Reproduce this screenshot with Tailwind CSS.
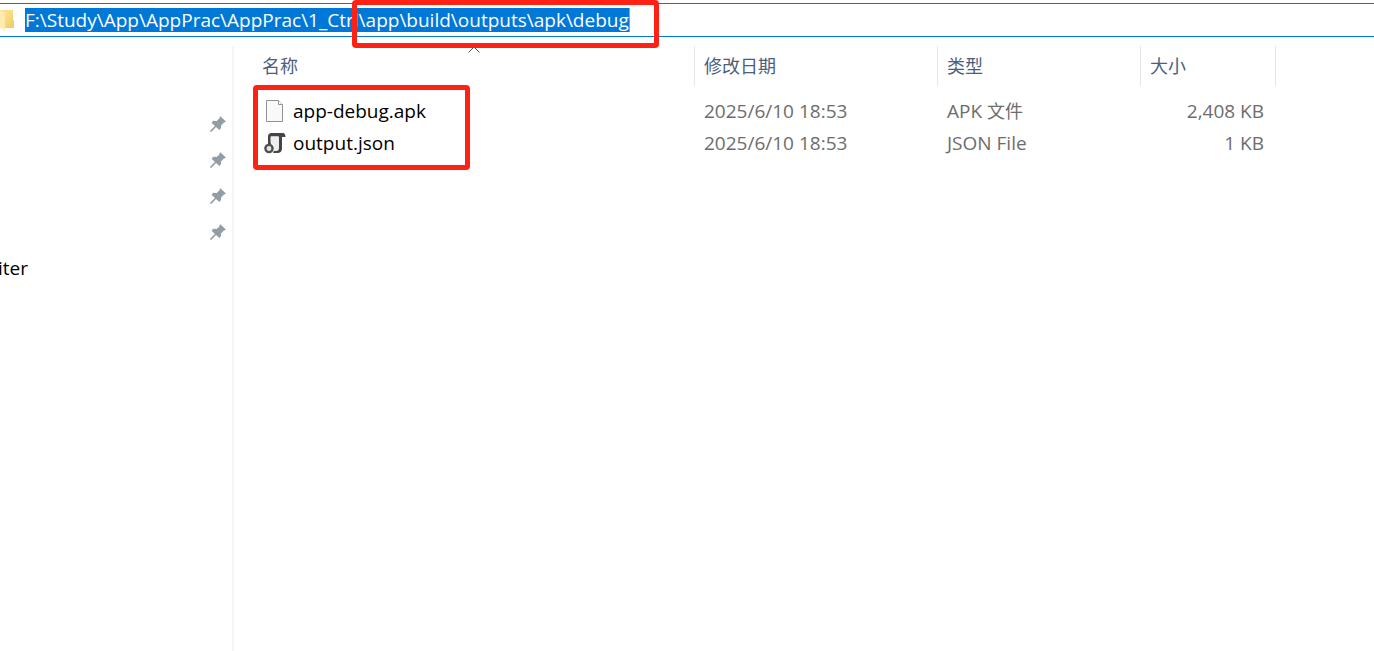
<!DOCTYPE html>
<html lang="zh-CN">
<head>
    <meta charset="UTF-8">
    <meta name="viewport" content="width=device-width, initial-scale=1.0">
    <title>debug</title>
    <script src="https://cdn.jsdelivr.net/npm/@tailwindcss/browser@4"></script>
</head>
<body class="relative flex min-h-screen flex-col overflow-x-hidden bg-white font-['Open_Sans','Noto_Sans_CJK_SC',sans-serif] text-[19px] leading-8 text-black">
    <svg class="hidden">
        <symbol id="pin" viewBox="0 0 16 16">
            <path d="M10.4 0.2L15.8 5.4L15 6.3L13.9 6.4L11.2 9.3L11 12L9.4 14L6 11.1L1.5 15.7L0.2 15.8L0.3 14.5L4.9 9.9L1.6 6.7L3.2 4.8L6.7 4.9L9.6 2.2L9.6 1Z" fill="#929da5"/>
        </symbol>
    </svg>

    <!-- Address bar -->
    <header class="mt-[3px] flex h-[34px] items-center border-y border-[#0078d7]">
        <svg class="h-6 w-[14px] shrink-0" viewBox="0 0 14 24">
            <defs>
                <linearGradient id="folder" x1="0" y1="0" x2="1" y2="1">
                    <stop offset="0.3" stop-color="#fddf8a"/>
                    <stop offset="1" stop-color="#eecb6b"/>
                </linearGradient>
            </defs>
            <path d="M0 2H13V12H14V20H0Z" fill="url(#folder)"/>
            <path d="M0 2L5 5V23L0 19Z" fill="#ffebad"/>
        </svg>
        <input type="text" aria-label="地址" value="F:\Study\App\AppPrac\AppPrac\1_Ctrl\app\build\outputs\apk\debug"
            class="ml-[11px] field-sizing-content h-6 border-r border-[#ff8728] bg-[#0078d7] leading-6 text-white outline-none">
    </header>

    <div class="flex flex-1 pt-[9px]">
        <!-- Navigation pane -->
        <nav class="w-[234px] shrink-0 border-r-2 border-[#f5f5f5] pt-[60px]">
            <ul>
                <li class="flex h-9 items-center justify-end pr-[6px]"><svg class="size-4"><use href="#pin"/></svg></li>
                <li class="flex h-9 items-center justify-end pr-[6px]"><svg class="size-4"><use href="#pin"/></svg></li>
                <li class="flex h-9 items-center justify-end pr-[6px]"><svg class="size-4"><use href="#pin"/></svg></li>
                <li class="flex h-9 items-center justify-end pr-[6px]"><svg class="size-4"><use href="#pin"/></svg></li>
                <li class="-ml-0.5 flex h-9 items-center">iter</li>
            </ul>
        </nav>

        <!-- File list -->
        <main class="relative min-w-0 flex-1">
            <svg class="absolute top-0 left-[234px] h-2 w-3" viewBox="0 0 12 8" fill="none" stroke="#555">
                <path d="M0.5 6.5L6 1L11.5 6.5"/>
            </svg>
            <table class="w-full table-fixed border-separate border-spacing-0 text-left whitespace-nowrap text-[#6d6d6d]">
                <colgroup>
                    <col class="w-[461px]">
                    <col class="w-[243px]">
                    <col class="w-[203px]">
                    <col class="w-[135px]">
                    <col>
                </colgroup>
                <thead class="text-lg text-[#4c607a]">
                    <tr class="h-10">
                        <th class="border-r border-[#e5e5e5] p-0 pl-7 font-normal">名称</th>
                        <th class="border-r border-[#e5e5e5] p-0 pl-[9px] font-normal">修改日期</th>
                        <th class="border-r border-[#e5e5e5] p-0 pl-[9px] font-normal">类型</th>
                        <th class="border-r border-[#e5e5e5] p-0 pl-[9px] font-normal">大小</th>
                        <td></td>
                    </tr>
                </thead>
                <tbody>
                    <tr class="h-[9px]"><td colspan="5" class="p-0"></td></tr>
                    <tr class="h-8">
                        <td class="p-0 pl-[30px] text-black">
                            <div class="flex items-center gap-[7px]">
                                <svg class="h-6 w-[22px]" viewBox="0 0 22 24">
                                    <path d="M2.5 1.5H14.5L18.5 5.5V22.5H2.5Z" fill="#f8f9f9" stroke="#929292"/>
                                    <path d="M14.5 1.5V5.5H18.5" fill="#fff" stroke="#929292"/>
                                </svg>
                                app-debug.apk
                            </div>
                        </td>
                        <td class="p-0 pl-[9px]">2025/6/10 18:53</td>
                        <td class="p-0 pl-[9px]">APK <span class="text-lg">文件</span></td>
                        <td class="p-0 pr-3 text-right">2,408 KB</td>
                        <td></td>
                    </tr>
                    <tr class="h-8">
                        <td class="p-0 pl-[30px] text-black">
                            <div class="flex items-center gap-[7px]">
                                <svg class="h-6 w-[22px]" viewBox="0 0 22 24">
                                    <path d="M4 13V5Q4.5 2 7.5 2H19.5Q21.8 3 21.5 6H18V18Q17.5 22 13.5 22H9L10 19.5H12Q14 19.5 14 17V5.5H7V13Z" fill="#454549"/>
                                    <path d="M6.5 5.5H15V17Q15 20 12 20H10V14L6.5 12Z" fill="#eeeef0"/>
                                    <circle cx="5" cy="17.5" r="3.6" fill="#e4e4e4" stroke="#505054" stroke-width="2.4"/>
                                </svg>
                                output.json
                            </div>
                        </td>
                        <td class="p-0 pl-[9px]">2025/6/10 18:53</td>
                        <td class="p-0 pl-[9px]">JSON File</td>
                        <td class="p-0 pr-3 text-right">1 KB</td>
                        <td></td>
                    </tr>
                </tbody>
            </table>

            <!-- Highlight around the file names -->
            <div class="pointer-events-none absolute top-[39px] left-[19px] h-[85px] w-[217px] rounded border-5 border-[#ff2114]"></div>
        </main>
    </div>

    <!-- Highlight around the end of the path -->
    <div class="pointer-events-none absolute top-0 left-[352px] h-12 w-[307px] rounded border-5 border-[#ff2114]"></div>
</body>
</html>
